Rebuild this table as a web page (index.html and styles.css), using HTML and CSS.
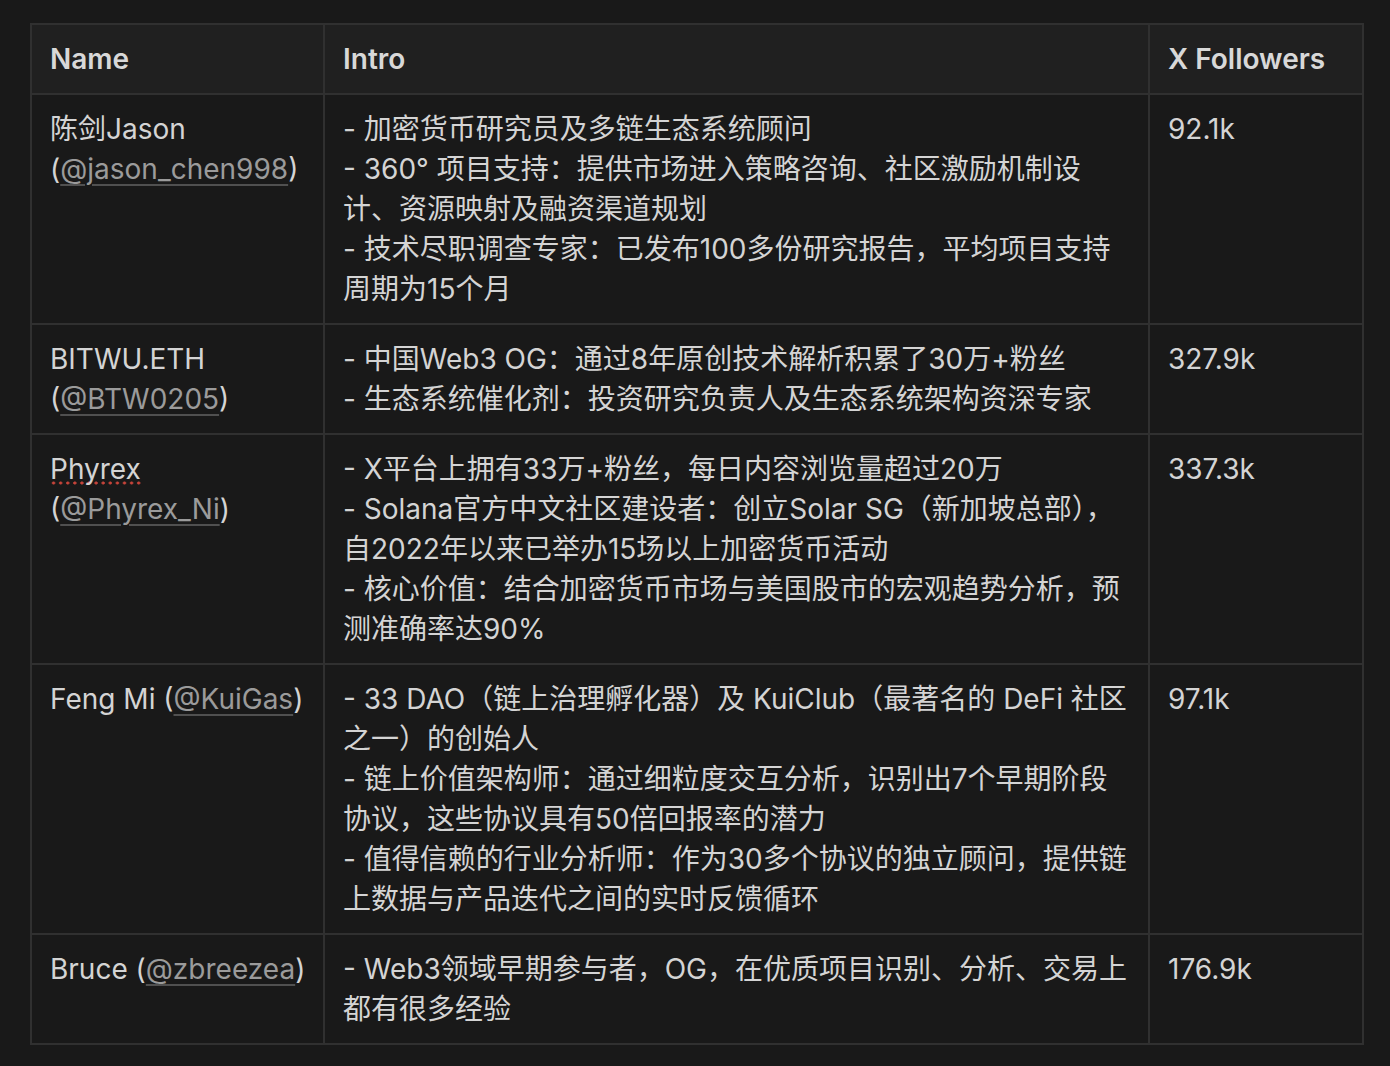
FILE: index.html
```html
<!DOCTYPE html>
<html lang="zh">
<head>
<meta charset="utf-8">
<title>KOL Table</title>
<link rel="stylesheet" href="styles.css">
</head>
<body>
<table class="kol">
  <colgroup>
    <col class="c-name">
    <col class="c-intro">
    <col class="c-fol">
  </colgroup>
  <thead>
    <tr><th>Name</th><th>Intro</th><th>X Followers</th></tr>
  </thead>
  <tbody>
    <tr>
      <td class="name">陈剑Jason<br>(<a class="handle">@jason_chen998</a>)</td>
      <td class="intro">- 加密货币研究员及多链生态系统顾问<br>- 360° 项目支持：提供市场进入策略咨询、社区激励机制设计、资源映射及融资渠道规划<br>- 技术尽职调查专家：已发布100多份研究报告，平均项目支持周期为15个月</td>
      <td class="num">92.1k</td>
    </tr>
    <tr>
      <td class="name">BITWU.ETH<br>(<a class="handle">@BTW0205</a>)</td>
      <td class="intro">- 中国Web3 OG：通过8年原创技术解析积累了30万+粉丝<br>- 生态系统催化剂：投资研究负责人及生态系统架构资深专家</td>
      <td class="num">327.9k</td>
    </tr>
    <tr>
      <td class="name"><span class="spell">Phyrex</span><br>(<a class="handle">@Phyrex_Ni</a>)</td>
      <td class="intro">- X平台上拥有33万+粉丝，每日内容浏览量超过20万<br>- Solana官方中文社区建设者：创立Solar SG（新加坡总部），自2022年以来已举办15场以上加密货币活动<br>- 核心价值：结合加密货币市场与美国股市的宏观趋势分析，预测准确率达90%</td>
      <td class="num">337.3k</td>
    </tr>
    <tr>
      <td class="name">Feng Mi (<a class="handle">@KuiGas</a>)</td>
      <td class="intro">- 33 DAO（链上治理孵化器）及 KuiClub（最著名的 DeFi 社区之一）的创始人<br>- 链上价值架构师：通过细粒度交互分析，识别出7个早期阶段协议，这些协议具有50倍回报率的潜力<br>- 值得信赖的行业分析师：作为30多个协议的独立顾问，提供链上数据与产品迭代之间的实时反馈循环</td>
      <td class="num">97.1k</td>
    </tr>
    <tr>
      <td class="name">Bruce (<a class="handle">@zbreezea</a>)</td>
      <td class="intro">- Web3领域早期参与者，OG，在优质项目识别、分析、交易上都有很多经验</td>
      <td class="num">176.9k</td>
    </tr>
  </tbody>
</table>
</body>
</html>
```

FILE: styles.css
```css
html, body {
  background: #191919;
}
body {
  margin: 0;
  padding: 23px 28px 0 30px;
  color: #d4d4d4;
  font-family: Inter, "Noto Sans CJK SC", sans-serif;
  font-size: 28px;
  line-height: 40px;
}
.kol {
  border-collapse: collapse;
  table-layout: fixed;
  width: 1332px;
}
.c-name { width: 293px; }
.c-intro { width: 825px; }
.c-fol { width: 214px; }
.kol th, .kol td {
  border: 2px solid #303030;
  padding: 14px 19px 14px 18px;
  vertical-align: top;
  text-align: left;
  word-break: normal;
  line-break: strict;
}
.kol th {
  background: #202020;
  font-weight: 600;
  color: #d8d8d8;
}
.kol td.name {
  padding-right: 8px;
}
.handle {
  color: #9b9b9b;
  text-decoration: underline;
  text-decoration-color: #505050;
  text-decoration-thickness: 1.5px;
  text-underline-offset: 5px;
}
.spell {
  background-image: radial-gradient(circle, #c8443a 1.3px, transparent 1.8px);
  background-size: 7.1px 6px;
  background-repeat: repeat-x;
  background-position: 0 100%;
}
```
